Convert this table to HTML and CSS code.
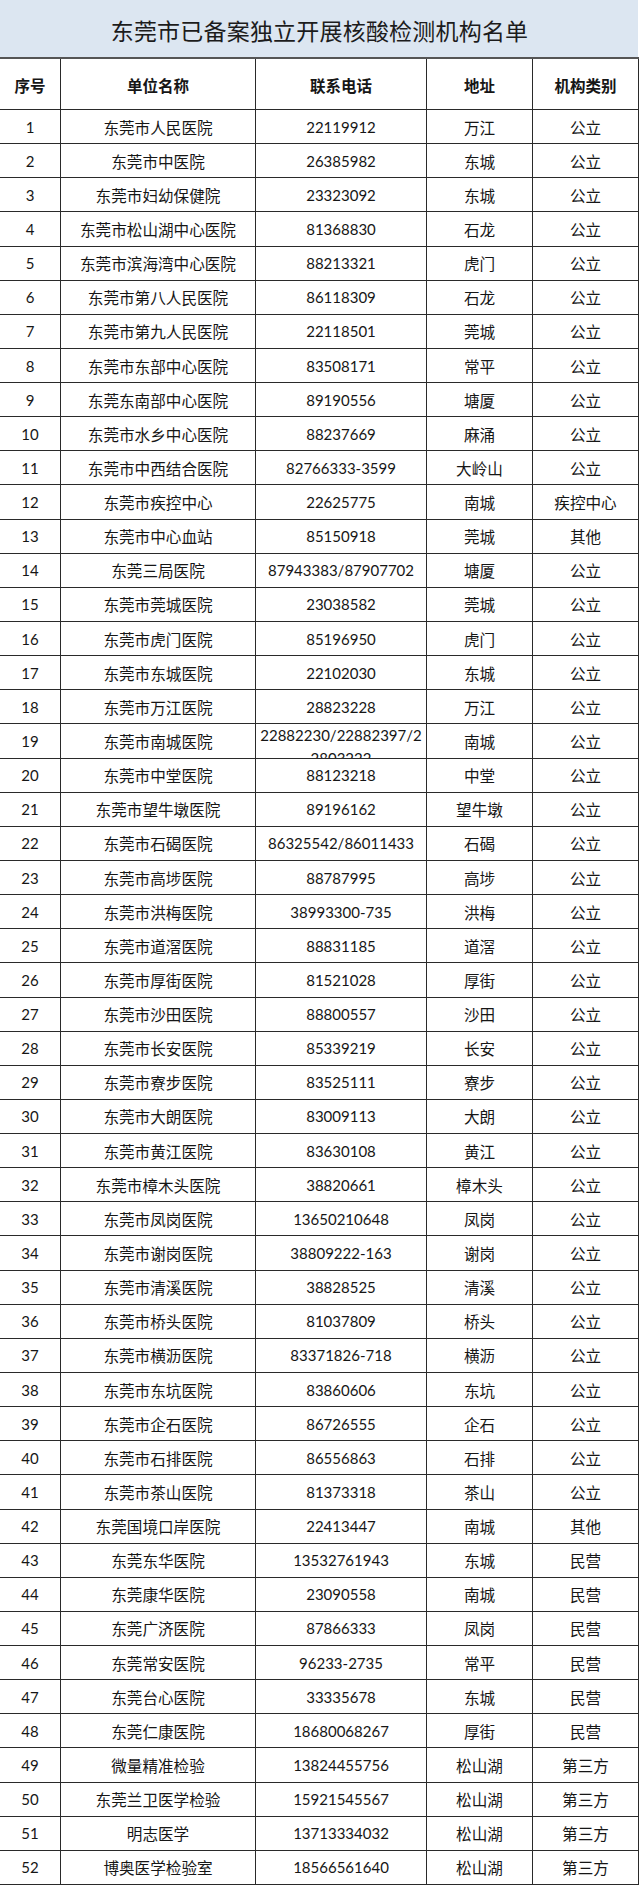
FILE: index.html
```html
<!DOCTYPE html>
<html lang="zh-CN">
<head>
<meta charset="utf-8">
<title>东莞市已备案独立开展核酸检测机构名单</title>
<link rel="stylesheet" href="styles.css">
</head>
<body>
<div class="sheet">
  <div class="title">东莞市已备案独立开展核酸检测机构名单</div>
  <div class="row head">
    <div class="c c1">序号</div><div class="c c2">单位名称</div><div class="c c3">联系电话</div><div class="c c4">地址</div><div class="c c5">机构类别</div>
  </div>
  <div class="rows">
    <div class="row"><div class="c c1">1</div><div class="c c2">东莞市人民医院</div><div class="c c3">22119912</div><div class="c c4">万江</div><div class="c c5">公立</div></div>
    <div class="row"><div class="c c1">2</div><div class="c c2">东莞市中医院</div><div class="c c3">26385982</div><div class="c c4">东城</div><div class="c c5">公立</div></div>
    <div class="row"><div class="c c1">3</div><div class="c c2">东莞市妇幼保健院</div><div class="c c3">23323092</div><div class="c c4">东城</div><div class="c c5">公立</div></div>
    <div class="row"><div class="c c1">4</div><div class="c c2">东莞市松山湖中心医院</div><div class="c c3">81368830</div><div class="c c4">石龙</div><div class="c c5">公立</div></div>
    <div class="row"><div class="c c1">5</div><div class="c c2">东莞市滨海湾中心医院</div><div class="c c3">88213321</div><div class="c c4">虎门</div><div class="c c5">公立</div></div>
    <div class="row"><div class="c c1">6</div><div class="c c2">东莞市第八人民医院</div><div class="c c3">86118309</div><div class="c c4">石龙</div><div class="c c5">公立</div></div>
    <div class="row"><div class="c c1">7</div><div class="c c2">东莞市第九人民医院</div><div class="c c3">22118501</div><div class="c c4">莞城</div><div class="c c5">公立</div></div>
    <div class="row"><div class="c c1">8</div><div class="c c2">东莞市东部中心医院</div><div class="c c3">83508171</div><div class="c c4">常平</div><div class="c c5">公立</div></div>
    <div class="row"><div class="c c1">9</div><div class="c c2">东莞东南部中心医院</div><div class="c c3">89190556</div><div class="c c4">塘厦</div><div class="c c5">公立</div></div>
    <div class="row"><div class="c c1">10</div><div class="c c2">东莞市水乡中心医院</div><div class="c c3">88237669</div><div class="c c4">麻涌</div><div class="c c5">公立</div></div>
    <div class="row"><div class="c c1">11</div><div class="c c2">东莞市中西结合医院</div><div class="c c3">82766333-3599</div><div class="c c4">大岭山</div><div class="c c5">公立</div></div>
    <div class="row"><div class="c c1">12</div><div class="c c2">东莞市疾控中心</div><div class="c c3">22625775</div><div class="c c4">南城</div><div class="c c5">疾控中心</div></div>
    <div class="row"><div class="c c1">13</div><div class="c c2">东莞市中心血站</div><div class="c c3">85150918</div><div class="c c4">莞城</div><div class="c c5">其他</div></div>
    <div class="row"><div class="c c1">14</div><div class="c c2">东莞三局医院</div><div class="c c3">87943383/87907702</div><div class="c c4">塘厦</div><div class="c c5">公立</div></div>
    <div class="row"><div class="c c1">15</div><div class="c c2">东莞市莞城医院</div><div class="c c3">23038582</div><div class="c c4">莞城</div><div class="c c5">公立</div></div>
    <div class="row"><div class="c c1">16</div><div class="c c2">东莞市虎门医院</div><div class="c c3">85196950</div><div class="c c4">虎门</div><div class="c c5">公立</div></div>
    <div class="row"><div class="c c1">17</div><div class="c c2">东莞市东城医院</div><div class="c c3">22102030</div><div class="c c4">东城</div><div class="c c5">公立</div></div>
    <div class="row"><div class="c c1">18</div><div class="c c2">东莞市万江医院</div><div class="c c3">28823228</div><div class="c c4">万江</div><div class="c c5">公立</div></div>
    <div class="row"><div class="c c1">19</div><div class="c c2">东莞市南城医院</div><div class="c c3 wrap">22882230/22882397/2<br>2803222</div><div class="c c4">南城</div><div class="c c5">公立</div></div>
    <div class="row"><div class="c c1">20</div><div class="c c2">东莞市中堂医院</div><div class="c c3">88123218</div><div class="c c4">中堂</div><div class="c c5">公立</div></div>
    <div class="row"><div class="c c1">21</div><div class="c c2">东莞市望牛墩医院</div><div class="c c3">89196162</div><div class="c c4">望牛墩</div><div class="c c5">公立</div></div>
    <div class="row"><div class="c c1">22</div><div class="c c2">东莞市石碣医院</div><div class="c c3">86325542/86011433</div><div class="c c4">石碣</div><div class="c c5">公立</div></div>
    <div class="row"><div class="c c1">23</div><div class="c c2">东莞市高埗医院</div><div class="c c3">88787995</div><div class="c c4">高埗</div><div class="c c5">公立</div></div>
    <div class="row"><div class="c c1">24</div><div class="c c2">东莞市洪梅医院</div><div class="c c3">38993300-735</div><div class="c c4">洪梅</div><div class="c c5">公立</div></div>
    <div class="row"><div class="c c1">25</div><div class="c c2">东莞市道滘医院</div><div class="c c3">88831185</div><div class="c c4">道滘</div><div class="c c5">公立</div></div>
    <div class="row"><div class="c c1">26</div><div class="c c2">东莞市厚街医院</div><div class="c c3">81521028</div><div class="c c4">厚街</div><div class="c c5">公立</div></div>
    <div class="row"><div class="c c1">27</div><div class="c c2">东莞市沙田医院</div><div class="c c3">88800557</div><div class="c c4">沙田</div><div class="c c5">公立</div></div>
    <div class="row"><div class="c c1">28</div><div class="c c2">东莞市长安医院</div><div class="c c3">85339219</div><div class="c c4">长安</div><div class="c c5">公立</div></div>
    <div class="row"><div class="c c1">29</div><div class="c c2">东莞市寮步医院</div><div class="c c3">83525111</div><div class="c c4">寮步</div><div class="c c5">公立</div></div>
    <div class="row"><div class="c c1">30</div><div class="c c2">东莞市大朗医院</div><div class="c c3">83009113</div><div class="c c4">大朗</div><div class="c c5">公立</div></div>
    <div class="row"><div class="c c1">31</div><div class="c c2">东莞市黄江医院</div><div class="c c3">83630108</div><div class="c c4">黄江</div><div class="c c5">公立</div></div>
    <div class="row"><div class="c c1">32</div><div class="c c2">东莞市樟木头医院</div><div class="c c3">38820661</div><div class="c c4">樟木头</div><div class="c c5">公立</div></div>
    <div class="row"><div class="c c1">33</div><div class="c c2">东莞市凤岗医院</div><div class="c c3">13650210648</div><div class="c c4">凤岗</div><div class="c c5">公立</div></div>
    <div class="row"><div class="c c1">34</div><div class="c c2">东莞市谢岗医院</div><div class="c c3">38809222-163</div><div class="c c4">谢岗</div><div class="c c5">公立</div></div>
    <div class="row"><div class="c c1">35</div><div class="c c2">东莞市清溪医院</div><div class="c c3">38828525</div><div class="c c4">清溪</div><div class="c c5">公立</div></div>
    <div class="row"><div class="c c1">36</div><div class="c c2">东莞市桥头医院</div><div class="c c3">81037809</div><div class="c c4">桥头</div><div class="c c5">公立</div></div>
    <div class="row"><div class="c c1">37</div><div class="c c2">东莞市横沥医院</div><div class="c c3">83371826-718</div><div class="c c4">横沥</div><div class="c c5">公立</div></div>
    <div class="row"><div class="c c1">38</div><div class="c c2">东莞市东坑医院</div><div class="c c3">83860606</div><div class="c c4">东坑</div><div class="c c5">公立</div></div>
    <div class="row"><div class="c c1">39</div><div class="c c2">东莞市企石医院</div><div class="c c3">86726555</div><div class="c c4">企石</div><div class="c c5">公立</div></div>
    <div class="row"><div class="c c1">40</div><div class="c c2">东莞市石排医院</div><div class="c c3">86556863</div><div class="c c4">石排</div><div class="c c5">公立</div></div>
    <div class="row"><div class="c c1">41</div><div class="c c2">东莞市茶山医院</div><div class="c c3">81373318</div><div class="c c4">茶山</div><div class="c c5">公立</div></div>
    <div class="row"><div class="c c1">42</div><div class="c c2">东莞国境口岸医院</div><div class="c c3">22413447</div><div class="c c4">南城</div><div class="c c5">其他</div></div>
    <div class="row"><div class="c c1">43</div><div class="c c2">东莞东华医院</div><div class="c c3">13532761943</div><div class="c c4">东城</div><div class="c c5">民营</div></div>
    <div class="row"><div class="c c1">44</div><div class="c c2">东莞康华医院</div><div class="c c3">23090558</div><div class="c c4">南城</div><div class="c c5">民营</div></div>
    <div class="row"><div class="c c1">45</div><div class="c c2">东莞广济医院</div><div class="c c3">87866333</div><div class="c c4">凤岗</div><div class="c c5">民营</div></div>
    <div class="row"><div class="c c1">46</div><div class="c c2">东莞常安医院</div><div class="c c3">96233-2735</div><div class="c c4">常平</div><div class="c c5">民营</div></div>
    <div class="row"><div class="c c1">47</div><div class="c c2">东莞台心医院</div><div class="c c3">33335678</div><div class="c c4">东城</div><div class="c c5">民营</div></div>
    <div class="row"><div class="c c1">48</div><div class="c c2">东莞仁康医院</div><div class="c c3">18680068267</div><div class="c c4">厚街</div><div class="c c5">民营</div></div>
    <div class="row"><div class="c c1">49</div><div class="c c2">微量精准检验</div><div class="c c3">13824455756</div><div class="c c4">松山湖</div><div class="c c5">第三方</div></div>
    <div class="row"><div class="c c1">50</div><div class="c c2">东莞兰卫医学检验</div><div class="c c3">15921545567</div><div class="c c4">松山湖</div><div class="c c5">第三方</div></div>
    <div class="row"><div class="c c1">51</div><div class="c c2">明志医学</div><div class="c c3">13713334032</div><div class="c c4">松山湖</div><div class="c c5">第三方</div></div>
    <div class="row"><div class="c c1">52</div><div class="c c2">博奥医学检验室</div><div class="c c3">18566561640</div><div class="c c4">松山湖</div><div class="c c5">第三方</div></div>
  </div>
</div>
</body>
</html>
```
FILE: styles.css
```css
html, body {
  margin: 0;
  padding: 0;
  background: #ffffff;
}
body {
  font-family: Lato, "Noto Sans CJK SC", sans-serif;
  color: #161616;
}
.sheet {
  width: 639px;
}
.title {
  height: 57px;
  width: 638px;
  background: #dce6f1;
  font-family: "Noto Sans CJK SC", sans-serif;
  font-size: 23px;
  line-height: 60px;
  text-align: center;
  color: #1c1c1c;
  letter-spacing: 0.2px;
  padding-left: 1px;
  box-sizing: border-box;
}
.row {
  display: grid;
  grid-template-columns: 61px 195px 171px 106px 106px;
  border-bottom: 1px solid #2a2a2a;
  box-sizing: border-box;
  width: 639px;
  min-height: 0;
  overflow: hidden;
}
.head {
  height: 53px;
  border-top: 2px solid #555555;
  font-weight: 700;
}
.head .c {
  font-family: "Noto Sans CJK SC", sans-serif;
  font-size: 15.5px;
  padding-top: 1px;
}
.rows {
  display: grid;
  grid-template-rows: repeat(52, minmax(0, 1fr));
  height: 1775px;
}
.c {
  border-right: 1px solid #2a2a2a;
  box-sizing: border-box;
  display: flex;
  align-items: center;
  justify-content: center;
  text-align: center;
  white-space: nowrap;
  overflow: hidden;
  min-height: 0;
  font-size: 15.6px;
  font-family: "Noto Sans CJK SC", sans-serif;
}
.rows .c1, .rows .c3 {
  font-family: Lato, "Noto Sans CJK SC", sans-serif;
  font-size: 15px;
}
.c.wrap {
  display: block;
  white-space: normal;
  line-height: 23px;
  padding-top: 0;
}
```
